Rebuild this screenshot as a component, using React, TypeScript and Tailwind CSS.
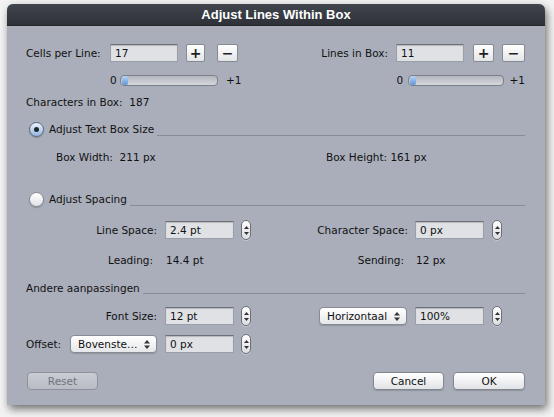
import React from "react";

const inputCls =
  "h-[18px] bg-[#dfe1e5] border border-[#9a9ea6] border-t-[#6c7078] shadow-[inset_0_1px_1px_rgba(0,0,0,0.18)] pl-[4px] flex items-center text-[#111]";

function Stepper() {
  return (
    <div className="w-[10px] h-[20px] rounded-full border border-[#6c7078] bg-gradient-to-b from-[#ffffff] to-[#dcdde0] flex flex-col items-center justify-center gap-[3px] shadow-[0_1px_0_rgba(255,255,255,0.3)]">
      <svg width="5" height="3" viewBox="0 0 5 3">
        <polygon points="2.5,0 5,3 0,3" fill="#333" />
      </svg>
      <svg width="5" height="3" viewBox="0 0 5 3">
        <polygon points="0,0 5,0 2.5,3" fill="#333" />
      </svg>
    </div>
  );
}

function Popup({ label, w }: { label: string; w: string }) {
  return (
    <div
      className={`${w} h-[18px] rounded-[4px] border border-[#878b92] bg-gradient-to-b from-[#ffffff] to-[#e6e7ea] flex items-center justify-between pl-[7px] pr-[6px] shadow-[0_1px_1px_rgba(0,0,0,0.15)]`}
    >
      <span>{label}</span>
      <svg width="6" height="9" viewBox="0 0 6 9">
        <polygon points="3,0 6,3.5 0,3.5" fill="#333" />
        <polygon points="0,5.5 6,5.5 3,9" fill="#333" />
      </svg>
    </div>
  );
}

function SqBtn({ sign, w }: { sign: string; w: string }) {
  return (
    <div
      className={`${w} h-[18px] rounded-[2px] border border-[#868a91] bg-gradient-to-b from-[#ffffff] to-[#e4e5e8] flex items-center justify-center font-bold text-[14px] leading-none text-[#222]`}
    >
      {sign}
    </div>
  );
}

function Slider({ w }: { w: string }) {
  return (
    <div
      className={`${w} h-[11px] rounded-[4px] border border-[#7b7f87] bg-gradient-to-b from-[#b3b6bd] to-[#d6d8dc] relative overflow-hidden`}
    >
      <div className="absolute left-[1px] top-0 bottom-0 w-[6px] rounded-[2px] bg-gradient-to-b from-[#b9d5f5] to-[#5f95d8]" />
    </div>
  );
}

function Radio({ on }: { on: boolean }) {
  return on ? (
    <div className="w-[15px] h-[15px] rounded-full border border-[#56667e] bg-gradient-to-b from-[#eef4fb] to-[#93b6e0] flex items-center justify-center shadow-[0_1px_1px_rgba(0,0,0,0.2)]">
      <div className="w-[5px] h-[5px] rounded-full bg-[#1c2633]" />
    </div>
  ) : (
    <div className="w-[15px] h-[15px] rounded-full border border-[#868a92] bg-gradient-to-b from-[#ffffff] to-[#e2e3e6] shadow-[0_1px_1px_rgba(0,0,0,0.2)]" />
  );
}

function Btn({ label, w, disabled }: { label: string; w: string; disabled?: boolean }) {
  return (
    <div
      className={`${w} h-[18px] rounded-[4px] border flex items-center justify-center ${
        disabled
          ? "border-[#8e929a] bg-gradient-to-b from-[#c9ccd2] to-[#b9bcc4] text-[#6f737b]"
          : "border-[#82868d] bg-gradient-to-b from-[#ffffff] to-[#e2e3e6] text-[#111] shadow-[0_1px_1px_rgba(0,0,0,0.15)]"
      }`}
    >
      {label}
    </div>
  );
}

export default function App() {
  return (
    <div className="w-[554px] h-[417px] bg-[#f3f3f3] pt-[4px] pl-[7px] overflow-hidden">
      <div
        className="w-[538px] h-[401px] rounded-t-[6px] bg-[#a9aeba] shadow-[2px_4px_8px_rgba(0,0,0,0.55)] flex flex-col text-[10.5px] text-[#111] leading-none"
        style={{ fontFamily: '"DejaVu Sans", sans-serif' }}
      >
        {/* Title bar */}
        <div
          className="h-[22px] rounded-t-[6px] bg-gradient-to-b from-[#41454d] to-[#2e3138] border-b border-[#24262b] flex items-center justify-center text-white font-bold text-[13px]"
          style={{ fontFamily: '"Liberation Sans", Arial, sans-serif' }}
        >
          Adjust Lines Within Box
        </div>

        <div className="flex flex-col pl-[19px] pr-[20px]">
          {/* Row 1 */}
          <div className="mt-[18px] h-[18px] flex items-center">
            <div className="w-[84px]">Cells per Line:</div>
            <div className={`${inputCls} w-[68px]`}>17</div>
            <div className="ml-[8px]">
              <SqBtn sign="+" w="w-[19px]" />
            </div>
            <div className="ml-[12px]">
              <SqBtn sign="−" w="w-[21px]" />
            </div>
            <div className="flex-1" />
            <div>Lines in Box:</div>
            <div className={`${inputCls} w-[68px] ml-[8px]`}>11</div>
            <div className="ml-[9px]">
              <SqBtn sign="+" w="w-[21px]" />
            </div>
            <div className="ml-[8px]">
              <SqBtn sign="−" w="w-[23px]" />
            </div>
          </div>

          {/* Row 2 sliders */}
          <div className="mt-[12px] h-[12px] flex items-center">
            <div className="ml-[84px] w-[10px]">0</div>
            <Slider w="w-[98px]" />
            <div className="ml-[8px]">+1</div>
            <div className="flex-1" />
            <div className="w-[11px]">0</div>
            <Slider w="w-[96px]" />
            <div className="ml-[6px]">+1</div>
          </div>

          {/* Row 3 */}
          <div className="mt-[9px] h-[14px] flex items-center whitespace-pre">Characters in Box:  187</div>

          {/* Row 4 */}
          <div className="mt-[12px] h-[16px] flex items-center">
            <div className="ml-[3px]">
              <Radio on />
            </div>
            <div className="ml-[5px]">Adjust Text Box Size</div>
            <div className="flex-1 ml-[3px] self-end mb-[1px] h-px bg-[#868b95]" />
          </div>

          {/* Row 5 */}
          <div className="mt-[13px] h-[14px] flex items-center whitespace-pre">
            <div className="w-[300px] pl-[30px]">Box Width:  211 px</div>
            <div>Box Height: 161 px</div>
          </div>

          {/* Row 6 */}
          <div className="mt-[27px] h-[16px] flex items-center">
            <div className="ml-[3px]">
              <Radio on={false} />
            </div>
            <div className="ml-[5px]">Adjust Spacing</div>
            <div className="flex-1 ml-[3px] self-end mb-[1px] h-px bg-[#868b95]" />
          </div>

          {/* Row 7 */}
          <div className="mt-[14px] h-[18px] flex items-center">
            <div className="w-[131px] text-right">Line Space:</div>
            <div className={`${inputCls} w-[69px] ml-[8px]`}>2.4 pt</div>
            <div className="ml-[7px]">
              <Stepper />
            </div>
            <div className="flex-1" />
            <div>Character Space:</div>
            <div className={`${inputCls} w-[69px] ml-[7px]`}>0 px</div>
            <div className="ml-[8px] mr-[23px]">
              <Stepper />
            </div>
          </div>

          {/* Row 8 */}
          <div className="mt-[14px] h-[14px] flex items-center">
            <div className="w-[131px] text-right pr-[4px]">Leading:</div>
            <div className="w-[69px] ml-[8px] pl-[1px]">14.4 pt</div>
            <div className="flex-1" />
            <div className="pr-[4px]">Sending:</div>
            <div className="w-[69px] ml-[7px] pl-[1px]">12 px</div>
            <div className="w-[10px] ml-[8px] mr-[23px]" />
          </div>

          {/* Row 9 */}
          <div className="mt-[14px] h-[14px] flex items-center">
            <div>Andere aanpassingen</div>
            <div className="flex-1 ml-[3px] self-end mb-[1px] h-px bg-[#868b95]" />
          </div>

          {/* Row 10 */}
          <div className="mt-[12px] h-[18px] flex items-center">
            <div className="w-[131px] text-right">Font Size:</div>
            <div className={`${inputCls} w-[69px] ml-[8px]`}>12 pt</div>
            <div className="ml-[7px]">
              <Stepper />
            </div>
            <div className="flex-1" />
            <Popup label="Horizontaal" w="w-[88px]" />
            <div className={`${inputCls} w-[69px] ml-[8px]`}>100%</div>
            <div className="ml-[8px] mr-[23px]">
              <Stepper />
            </div>
          </div>

          {/* Row 11 */}
          <div className="mt-[10px] h-[18px] flex items-center">
            <div className="w-[44px]">Offset:</div>
            <Popup label="Bovenste…" w="w-[87px]" />
            <div className={`${inputCls} w-[69px] ml-[8px]`}>0 px</div>
            <div className="ml-[7px]">
              <Stepper />
            </div>
          </div>

          {/* Row 12 */}
          <div className="mt-[19px] h-[18px] flex items-center">
            <div className="ml-[1px]">
              <Btn label="Reset" w="w-[71px]" disabled />
            </div>
            <div className="flex-1" />
            <Btn label="Cancel" w="w-[71px]" />
            <div className="ml-[9px]">
              <Btn label="OK" w="w-[72px]" />
            </div>
          </div>
        </div>
      </div>
    </div>
  );
}
